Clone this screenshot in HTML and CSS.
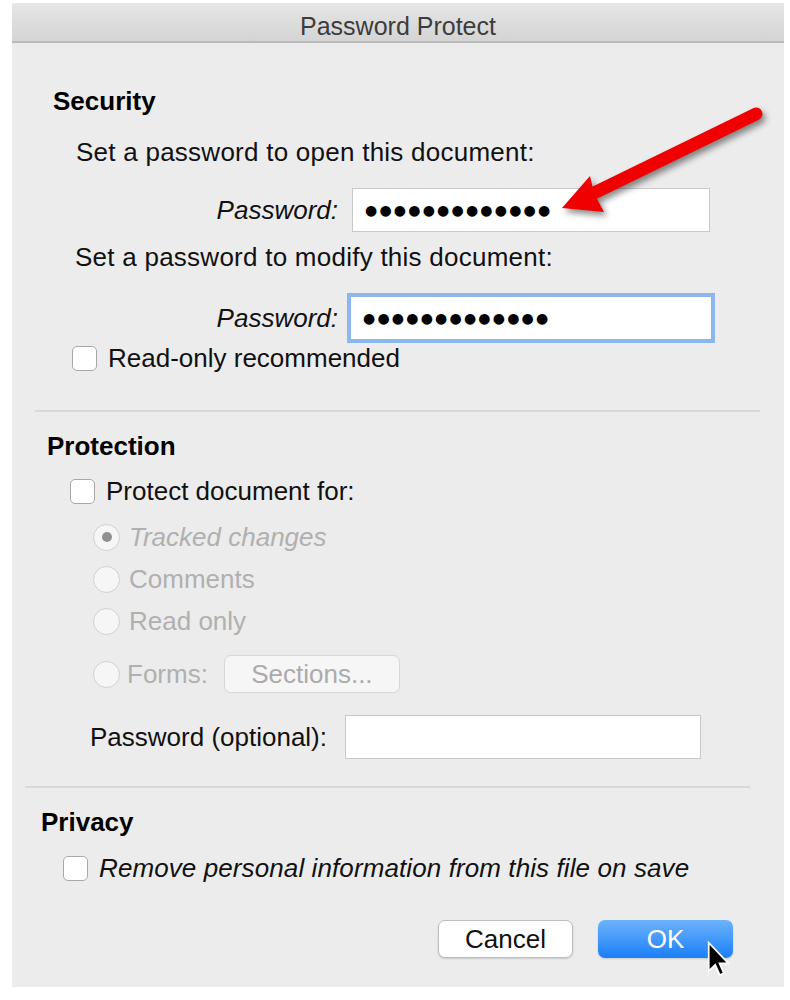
FILE: index.html
```html
<!DOCTYPE html>
<html lang="en">
<head>
  <meta charset="UTF-8">
  <meta name="viewport" content="width=device-width, initial-scale=1.0">
  <title>Password Protect</title>
  <link rel="stylesheet" href="styles.css">
</head>
<body>
  <div class="dialog">
    <div class="titlebar">Password Protect</div>

    <section class="group security">
      <h2>Security</h2>
      <p class="prompt">Set a password to open this document:</p>
      <div class="pw-row">
        <span class="pw-label">Password:</span>
        <div class="field"><span class="dots">●●●●●●●●●●●●●</span></div>
      </div>
      <p class="prompt second">Set a password to modify this document:</p>
      <div class="pw-row focus-row">
        <span class="pw-label">Password:</span>
        <div class="field focused"><span class="dots">●●●●●●●●●●●●●</span></div>
      </div>
      <label class="check"><span class="box"></span>Read-only recommended</label>
    </section>

    <div class="sep sep-top"></div>

    <section class="group protection">
      <h2>Protection</h2>
      <label class="check"><span class="box"></span>Protect document for:</label>
      <div class="radios">
        <div class="radio"><span class="circle on"></span><em>Tracked changes</em></div>
        <div class="radio"><span class="circle"></span>Comments</div>
        <div class="radio"><span class="circle"></span>Read only</div>
        <div class="radio forms"><span class="circle"></span>Forms:<span class="btn-disabled">Sections...</span></div>
      </div>
      <div class="opt-row">
        <span class="opt-label">Password (optional):</span>
        <div class="field opt-field"></div>
      </div>
    </section>

    <div class="sep sep-bottom"></div>

    <section class="group privacy">
      <h2>Privacy</h2>
      <label class="check"><span class="box"></span><span class="slant">Remove personal information from this file on save</span></label>
    </section>

    <div class="actions">
      <button class="btn">Cancel</button>
      <button class="btn primary">OK</button>
    </div>
  </div>

  <!-- annotation arrow drawn over the screenshot -->
  <svg class="arrow" width="790" height="1000" viewBox="0 0 790 1000">
    <line x1="756" y1="114" x2="592" y2="194" stroke="#f00000" stroke-width="13" stroke-linecap="round"/>
    <path d="M562 208 L590 176 L594 193 L604 212 Z" fill="#f00000"/>
  </svg>

  <svg class="cursor" width="24" height="36" viewBox="0 0 14 21">
    <path d="M1 1 L1 17.5 L4.8 13.8 L7.4 19.8 L9.8 18.8 L7.3 13 L12.5 13 Z" fill="#000" stroke="#fff" stroke-width="1"/>
  </svg>
</body>
</html>
```

FILE: styles.css
```css
body {
  margin: 0;
  background: #fff;
  font-family: "Liberation Sans", Arial, sans-serif;
  font-size: 26px;
  color: #111;
}
.dialog {
  margin: 3px 0 0 12px;
  width: 772px;
  padding-bottom: 29px;
  background: #ececec;
}
.titlebar {
  height: 38px;
  line-height: 46px;
  border-bottom: 2px solid #b8b8b8;
  background: linear-gradient(#e6e6e6, #d4d4d4);
  text-align: center;
  font-size: 25px;
  color: #3c3c3c;
  overflow: hidden;
}
.group h2 {
  margin: 0;
  font-size: 26px;
  line-height: 30px;
  font-weight: bold;
  color: #000;
}
.security {
  padding-left: 41px;
}
.security h2 {
  margin-top: 43px;
}
.prompt {
  margin: 21px 0 0;
  padding-left: 23px;
  line-height: 30px;
  letter-spacing: 0.25px;
}
.prompt.second {
  margin-top: 10px;
  padding-left: 22px;
}
.pw-row {
  display: flex;
  align-items: center;
  gap: 14px;
  margin-top: 21px;
}
.pw-row.focus-row {
  margin-top: 24px;
  gap: 12px;
}
.pw-label {
  width: 285px;
  text-align: right;
  font-style: italic;
}
.field {
  box-sizing: border-box;
  width: 358px;
  height: 44px;
  padding-left: 12px;
  background: #fff;
  border: 1px solid #c9c9c9;
  display: flex;
  align-items: center;
}
.field.focused {
  width: 362px;
  border-color: #8fb6e6;
  box-shadow: 0 0 0 3px #8ab8ee;
}
.dots {
  font-family: "DejaVu Sans", sans-serif;
  font-size: 14px;
  letter-spacing: 2.2px;
  color: #000;
}
.check {
  display: flex;
  align-items: center;
  gap: 11px;
  height: 30px;
}
.security .check {
  margin-top: 3px;
  padding-left: 19px;
}
.box {
  box-sizing: border-box;
  width: 25px;
  height: 25px;
  background: #fff;
  border: 1px solid #a8a8a8;
  border-radius: 5px;
}
.sep {
  height: 0;
  border-top: 2px solid #d9d9d9;
}
.sep-top {
  margin: 37px 24px 0 23px;
}
.sep-bottom {
  margin: 27px 34px 0 13px;
}
.protection {
  padding-left: 35px;
}
.protection h2 {
  margin-top: 19px;
}
.protection .check {
  margin-top: 15px;
  padding-left: 23px;
}
.radios {
  margin-top: 16px;
  padding-left: 46px;
  display: flex;
  flex-direction: column;
  gap: 12px;
  color: #b0b0b0;
}
.radio {
  display: flex;
  align-items: center;
  gap: 9px;
  height: 30px;
}
.radio em {
  font-style: italic;
}
.radio.forms {
  height: 38px;
  margin-top: 7px;
  gap: 7px;
}
.circle {
  box-sizing: border-box;
  width: 27px;
  height: 27px;
  border-radius: 50%;
  background: #f6f6f6;
  border: 1px solid #d0d0d0;
  display: flex;
  align-items: center;
  justify-content: center;
}
.circle.on::after {
  content: "";
  width: 10px;
  height: 10px;
  border-radius: 50%;
  background: #909090;
}
.btn-disabled {
  box-sizing: border-box;
  margin-left: 9px;
  width: 176px;
  height: 38px;
  line-height: 36px;
  text-align: center;
  background: #f6f6f6;
  border: 1px solid #d6d6d6;
  border-radius: 7px;
  color: #ababab;
}
.opt-row {
  display: flex;
  align-items: center;
  margin-top: 22px;
  padding-left: 43px;
  gap: 18px;
}
.opt-field {
  width: 356px;
}
.privacy {
  padding-left: 29px;
}
.privacy h2 {
  margin-top: 19px;
}
.privacy .check {
  margin-top: 16px;
  padding-left: 22px;
}
.slant {
  font-style: italic;
  letter-spacing: 0.1px;
}
.actions {
  display: flex;
  justify-content: flex-end;
  gap: 25px;
  margin-top: 37px;
  padding-right: 51px;
}
.btn {
  width: 135px;
  height: 38px;
  font-family: inherit;
  font-size: 26px;
  border-radius: 7px;
  border: 1px solid #bdbdbd;
  background: #fff;
  color: #111;
  box-shadow: 0 1px 2px rgba(0,0,0,0.15);
  padding: 0;
}
.btn.primary {
  border: none;
  background: linear-gradient(#6db3fb, #1a7ff8);
  color: #fff;
}
.arrow {
  position: absolute;
  left: 0;
  top: 0;
  pointer-events: none;
  filter: drop-shadow(3px 4px 3px rgba(0,0,0,0.45));
}
.cursor {
  position: absolute;
  left: 707px;
  top: 941px;
  pointer-events: none;
}
```
